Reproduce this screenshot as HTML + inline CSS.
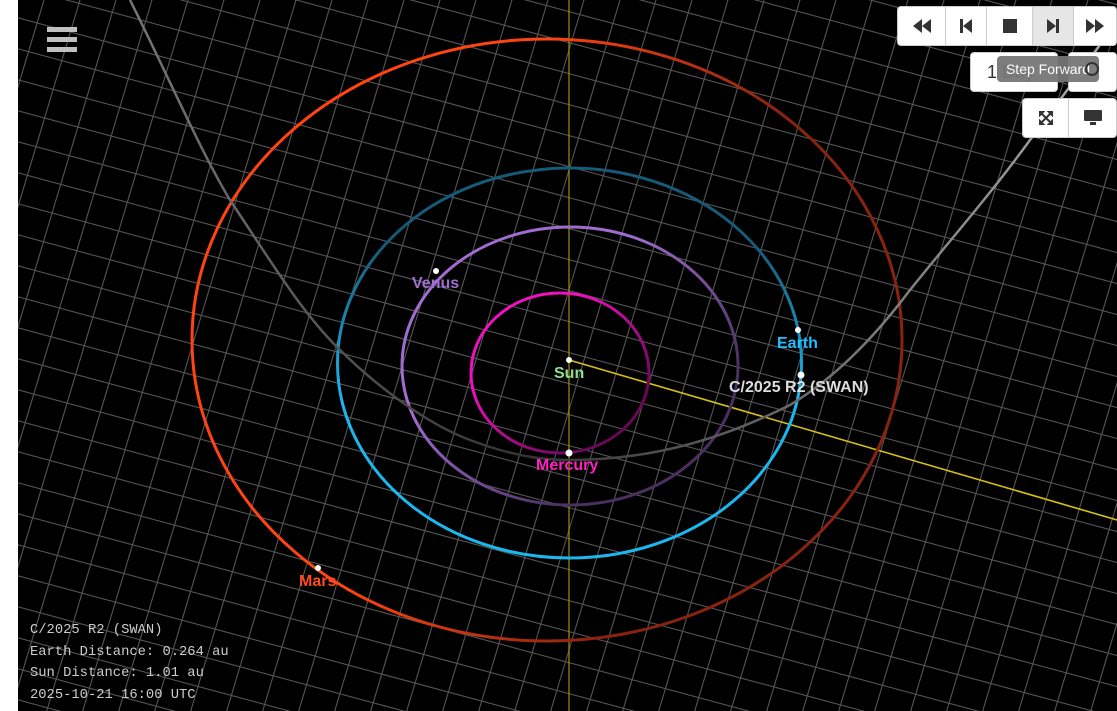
<!DOCTYPE html>
<html><head><meta charset="utf-8"><style>
html,body{margin:0;padding:0;width:1117px;height:711px;overflow:hidden;background:#fff;font-family:"Liberation Sans",sans-serif}
#v{position:absolute;left:18px;top:0;width:1099px;height:711px;background:#000;overflow:hidden}
svg{position:absolute;left:0;top:0}
.lbl{position:absolute;font-weight:bold;font-size:16px;white-space:nowrap}
.info{position:absolute;left:30px;top:620px;color:#ccc;font-family:"Liberation Mono",monospace;font-size:13.8px;line-height:21.7px}
.btn{position:absolute;background:#fff;border:1px solid #ccc;box-sizing:border-box;border-radius:4px;display:flex}
.btn div{display:flex;align-items:center;justify-content:center;border-right:1px solid #ccc;height:100%}
.btn div:last-child{border-right:none}
</style></head><body>
<div id="v">
<svg id="s" width="1099" height="711" viewBox="18 0 1099 711">
<defs>
<linearGradient id="mars" x1="0" y1="0" x2="1" y2="0.3"><stop offset="0.45" stop-color="#ff4412"/><stop offset="0.8" stop-color="#8a2210"/></linearGradient>
<linearGradient id="earth" x1="0" y1="0" x2="0" y2="1"><stop offset="0.2" stop-color="#155a78"/><stop offset="0.6" stop-color="#1ab8f0"/></linearGradient>
<linearGradient id="venus" x1="0" y1="0" x2="1" y2="1"><stop offset="0.35" stop-color="#a06cd0"/><stop offset="0.75" stop-color="#4a3060"/></linearGradient>
<linearGradient id="merc" x1="0" y1="0" x2="1" y2="1"><stop offset="0.3" stop-color="#f010c0"/><stop offset="0.8" stop-color="#6a0858"/></linearGradient>
<linearGradient id="com" x1="0" y1="0" x2="1" y2="0"><stop offset="0" stop-color="#777"/><stop offset="0.4" stop-color="#333"/><stop offset="1" stop-color="#aaa"/></linearGradient>
</defs>
<g id="grid" stroke="#555" stroke-width="1.1"></g>
<line x1="569" y1="0" x2="569" y2="711" stroke="#a09010" stroke-width="1.2"/>
<line x1="569" y1="360" x2="1117" y2="520" stroke="#d8c010" stroke-width="1.6"/>
<ellipse cx="547" cy="340" rx="355" ry="301" fill="none" stroke="url(#mars)" stroke-width="3"/>
<ellipse cx="569.5" cy="363" rx="232" ry="195" fill="none" stroke="url(#earth)" stroke-width="3"/>
<ellipse cx="570" cy="366" rx="168" ry="139" fill="none" stroke="url(#venus)" stroke-width="3"/>
<ellipse cx="560" cy="373" rx="89" ry="80" fill="none" stroke="url(#merc)" stroke-width="3"/>
<path d="M130 0 C170 80 200 150 230 200 C270 260 300 310 337 347 C380 390 430 425 470 440 C510 455 540 460 569 460 C650 460 720 440 790 405 C840 375 880 330 910 290 C950 240 990 195 1030 140 C1060 100 1090 60 1117 20" fill="none" stroke="url(#com)" stroke-width="2.5"/>
<g fill="#fff"><circle cx="569" cy="360" r="3"/><circle cx="569" cy="453" r="3.5"/><circle cx="436" cy="271" r="3"/><circle cx="798" cy="330" r="3"/><circle cx="801" cy="375" r="3.5"/><circle cx="318" cy="568" r="3"/></g>
</svg>
<div class="lbl" style="left:536px;top:365px;color:#90e090">Sun</div>
<div class="lbl" style="left:518px;top:457px;color:#ff20c0">Mercury</div>
<div class="lbl" style="left:394px;top:275px;color:#a070d0">Venus</div>
<div class="lbl" style="left:759px;top:335px;color:#20c0ff">Earth</div>
<div class="lbl" style="left:711px;top:379px;color:#ddd">C/2025 R2 (SWAN)</div>
<div class="lbl" style="left:281px;top:573px;color:#ff4a20">Mars</div>
<div style="position:absolute;left:29px;top:27px;width:30px">
<div style="height:5px;background:#c0c0c0;margin-bottom:5px"></div><div style="height:5px;background:#c0c0c0;margin-bottom:5px"></div><div style="height:5px;background:#c0c0c0"></div></div>
</div>
<div class="info">C/2025 R2 (SWAN)<br>Earth Distance: 0.264 au<br>Sun Distance: 1.01 au<br>2025-10-21 16:00 UTC</div>
<div class="btn" style="left:897px;top:6px;width:220px;height:40px">
<div style="width:47px"><svg style="position:static" width="18" height="14"><path d="M9 0V14L0 7ZM18 0V14L9 7Z" fill="#333"/></svg></div>
<div style="width:40px"><svg style="position:static" width="12" height="14"><path d="M0 0H3V14H0ZM12 0V14L3 7Z" fill="#333"/></svg></div>
<div style="width:45px"><div style="width:14px;height:14px;background:#333;border:none"></div></div>
<div style="width:40px;background:#e6e6e6"><svg style="position:static" width="12" height="14"><path d="M0 0V14L9 7ZM9 0H12V14H9Z" fill="#333"/></svg></div>
<div style="flex:1"><svg style="position:static" width="18" height="14"><path d="M0 0V14L9 7ZM9 0V14L18 7Z" fill="#333"/></svg></div>
</div>
<div class="btn" style="left:970px;top:52px;width:88px;height:40px;align-items:center;padding-left:16px;font-size:18px;color:#333">1 Day</div>
<div class="btn" style="left:1068px;top:52px;width:49px;height:40px;align-items:center;justify-content:center"></div>
<div style="position:absolute;left:997px;top:56px;width:102px;height:26px;background:#777;border-radius:4px;color:#fff;font-size:14px;line-height:26px;text-align:center;opacity:.95">Step Forward</div>
<div style="position:absolute;left:1085px;top:62px;width:14px;height:14px;border:2px solid #333;border-radius:50%;box-sizing:border-box"></div>
<div class="btn" style="left:1022px;top:98px;width:95px;height:40px">
<div style="width:45px"><svg style="position:static" width="14" height="14"><path d="M0 0H5L0 5ZM14 0V5L9 0ZM0 14V9L5 14ZM14 14H9L14 9ZM2 2L12 12M12 2L2 12" fill="#333" stroke="#333" stroke-width="2"/></svg></div>
<div style="flex:1"><svg style="position:static" width="18" height="16"><rect x="0" y="0" width="18" height="11" rx="1" fill="#333"/><rect x="6" y="12" width="6" height="3" fill="#333"/></svg></div>
</div>
<script>
var g=document.getElementById('grid'),h='';
for(var y0=-400;y0<760;y0+=31){h+='<line x1="0" y1="'+(y0+10)+'" x2="1200" y2="'+(y0+10+0.27*1200)+'"/>';}
for(var x0=-100;x0<1400;x0+=36){h+='<line x1="'+x0+'" y1="0" x2="'+(x0-0.3*720)+'" y2="720"/>';}
g.innerHTML=h;
</script>
</body></html>
